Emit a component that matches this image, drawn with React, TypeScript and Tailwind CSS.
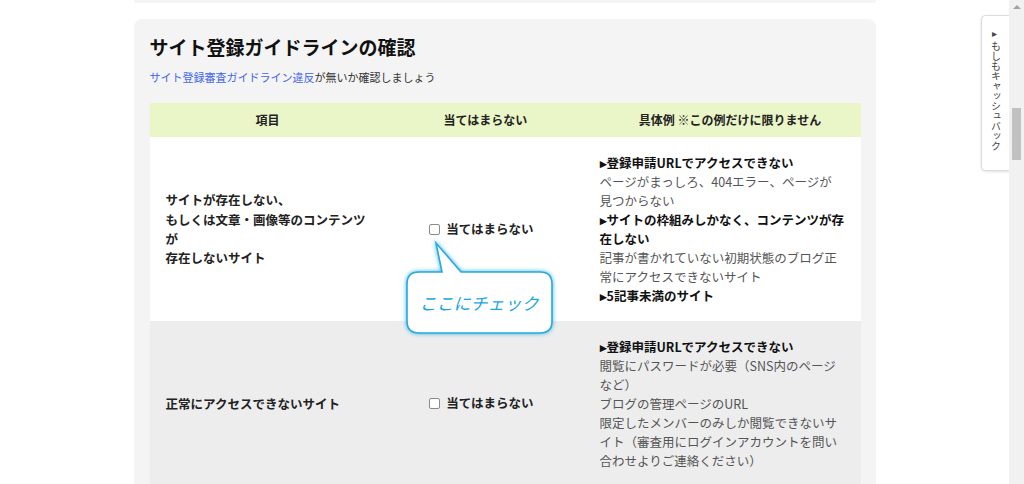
import React from "react";

const jp = { fontFamily: '"Noto Sans CJK JP", "Noto Sans", sans-serif' };

type Line = { text: string; bold?: boolean };

const rows: { title: string[]; examples: Line[]; bg: string }[] = [
  {
    title: ["サイトが存在しない、", "もしくは文章・画像等のコンテンツ", "が", "存在しないサイト"],
    bg: "bg-white",
    examples: [
      { text: "▸登録申請URLでアクセスできない", bold: true },
      { text: "ページがまっしろ、404エラー、ページが" },
      { text: "見つからない" },
      { text: "▸サイトの枠組みしかなく、コンテンツが存", bold: true },
      { text: "在しない", bold: true },
      { text: "記事が書かれていない初期状態のブログ正" },
      { text: "常にアクセスできないサイト" },
      { text: "▸5記事未満のサイト", bold: true },
    ],
  },
  {
    title: ["正常にアクセスできないサイト"],
    bg: "bg-[#ededed]",
    examples: [
      { text: "▸登録申請URLでアクセスできない", bold: true },
      { text: "閲覧にパスワードが必要（SNS内のページ" },
      { text: "など）" },
      { text: "ブログの管理ページのURL" },
      { text: "限定したメンバーのみしか閲覧できないサ" },
      { text: "イト（審査用にログインアカウントを問い" },
      { text: "合わせよりご連絡ください）" },
    ],
  },
];

const CheckLabel = () => (
  <label className="flex items-center justify-center gap-[6px] text-[12.5px] font-bold text-[#222]">
    <span className="block h-[11px] w-[11px] rounded-[2px] border border-[#8a8a8a] bg-white" />
    当てはまらない
  </label>
);

const Callout = () => (
  <div className="absolute left-[250px] top-[135px] h-[100px] w-[160px]">
    <svg
      width="160"
      height="100"
      viewBox="0 0 160 100"
      className="absolute inset-0 drop-shadow-[0_0_2px_#38b6e6]"
    >
      <path
        d="M19 34 H42 L36 5 L61 34 H140 Q152 34 152 46 V83 Q152 95 140 95 H19 Q7 95 7 83 V46 Q7 34 19 34 Z"
        fill="#fff"
        stroke="#2aa9dc"
        strokeWidth="1.6"
      />
    </svg>
    <div className="absolute left-[7px] top-[34px] flex h-[61px] w-[145px] items-center justify-center text-[17px] italic text-[#1ea6df]">
      ここにチェック
    </div>
  </div>
);

export default function App() {
  return (
    <div className="flex h-[484px] w-full overflow-hidden bg-white" style={jp}>
      <main className="relative flex-1 overflow-hidden">
        <div className="mx-auto w-[742px]">
          {/* previous card bottom */}
          <div className="h-[3px] rounded-b-[8px] bg-[#f4f4f4]" />

          <section className="mt-[16px] rounded-[8px] bg-[#f4f4f4] px-[16px] pb-6 pt-[15px]">
            <h2 className="text-[19px] font-bold leading-[26px] text-[#111]">
              サイト登録ガイドラインの確認
            </h2>
            <p className="mt-[8px] text-[11px] leading-[18px] text-[#333]">
              <a className="text-[#3f64e8]">サイト登録審査ガイドライン違反</a>
              が無いか確認しましょう
            </p>

            <div className="relative mt-[17px] w-[711px]">
              <table className="w-full table-fixed border-collapse">
                <colgroup>
                  <col className="w-[236px]" />
                  <col className="w-[200px]" />
                  <col className="w-[275px]" />
                </colgroup>
                <thead>
                  <tr className="h-[34px] bg-[#eaf6c8] text-[12px] font-bold text-[#222]">
                    <th className="text-center">項目</th>
                    <th className="text-center">当てはまらない</th>
                    <th className="pl-[14px] text-center">具体例 ※この例だけに限りません</th>
                  </tr>
                </thead>
                <tbody>
                  {rows.map((row, i) => (
                    <tr key={i} className={row.bg}>
                      <td className="py-4 pl-4 align-middle text-[12.5px] font-bold leading-[19.3px] text-[#222]">
                        {row.title.map((t) => (
                          <span key={t} className="block whitespace-nowrap">
                            {t}
                          </span>
                        ))}
                      </td>
                      <td className="pr-[8px] align-middle">
                        <CheckLabel />
                      </td>
                      <td className="py-4 pl-[14px] align-middle text-[12.5px] leading-[19px]">
                        {row.examples.map((l, j) => (
                          <span
                            key={j}
                            className={
                              l.bold
                                ? "block whitespace-nowrap font-bold text-[#111]"
                                : "block whitespace-nowrap text-[#555]"
                            }
                          >
                            {l.text}
                          </span>
                        ))}
                      </td>
                    </tr>
                  ))}
                </tbody>
              </table>
              <Callout />
            </div>
          </section>
        </div>

        {/* side tab */}
        <div className="absolute right-0 top-[15px] flex h-[156px] w-[28px] justify-center rounded-l-[5px] border border-r-0 border-[#dcdcdc] bg-white pt-[12px] shadow-[0_1px_3px_rgba(0,0,0,0.12)]">
          <span className="text-[10px] leading-[12px] text-[#444] [writing-mode:vertical-rl]">
            ▸ もしもキャッシュバック
          </span>
        </div>
      </main>

      {/* scrollbar */}
      <div className="flex w-[15px] flex-col items-center bg-[#f1f1f1]">
        <div className="mt-[5px] h-0 w-0 border-x-[4px] border-b-[4px] border-x-transparent border-b-[#a3a3a3]" />
        <div className="mt-[99px] h-[52px] w-[9px] bg-[#c1c1c1]" />
      </div>
    </div>
  );
}
